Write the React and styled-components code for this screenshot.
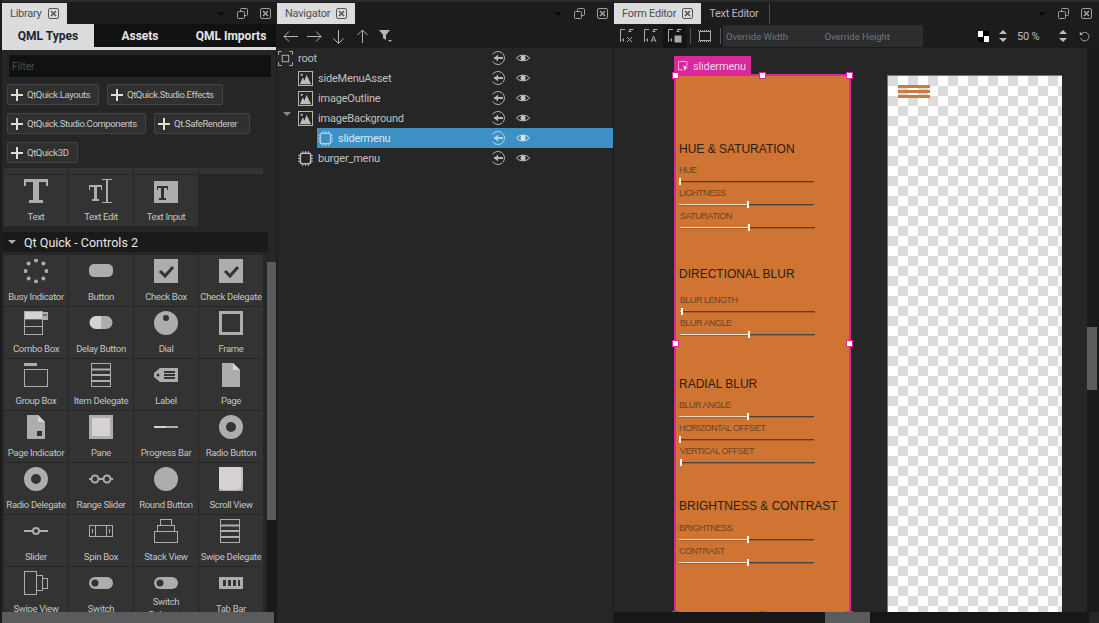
import React from 'react';
import styled, { createGlobalStyle } from 'styled-components';

const GlobalStyle = createGlobalStyle`
  html, body { margin: 0; padding: 0; background: #1c1c1c; overflow: hidden; }
  * { box-sizing: border-box; }
`;

const Shell = styled.div`
  width: 1099px;
  height: 623px;
  display: flex;
  padding-left: 2px;
  background: #1c1c1c;
  font-family: Roboto, "Open Sans", sans-serif;
  font-size: 11px;
  overflow: hidden;
`;
const Pane = styled.section`
  width: ${p => p.$width}px;
  margin-right: ${p => p.$gap || 0}px;
  display: flex;
  flex-direction: column;
  height: 623px;
  background: #262626;
  overflow: hidden;
`;
const TabBar = styled.div`
  height: 24px;
  flex: none;
  display: flex;
  background: #1c1c1c;
  border-top: 2px solid #2a2a2a;
  padding-top: 1px;
`;
const Tab = styled.div`
  height: 21px;
  padding: 0 8px;
  display: flex;
  align-items: center;
  gap: 6px;
  font-size: 11px;
  letter-spacing: -0.25px;
  white-space: nowrap;
  background: ${p => (p.$active ? '#dcdcdc' : 'transparent')};
  color: ${p => (p.$active ? '#4a4f55' : '#b9b9b9')};
  border-right: ${p => (p.$active ? 'none' : '1px solid #4a4a4a')};
  width: ${p => (p.$wide ? `${p.$wide}px` : 'auto')};
`;
const PaneActions = styled.div`
  margin-left: auto;
  width: 54px;
  margin-right: ${p => p.$right}px;
  display: flex;
  align-items: center;
  justify-content: space-between;
  color: #a8a8a8;
`;
const Triangle = styled.span`
  width: 0;
  height: 0;
  border-left: 4px solid transparent;
  border-right: 4px solid transparent;
  border-top: 4px solid #0b0b0b;
`;

const CloseBox = ({ size = 11, color = '#555' }) => (
  <svg width={size} height={size} viewBox="0 0 11 11" fill="none" stroke={color}>
    <rect x=".5" y=".5" width="10" height="10" rx="1.5" />
    <path d="M3 3l5 5M8 3l-5 5" strokeWidth="1.6" />
  </svg>
);
const FloatIcon = () => (
  <svg width="11" height="11" viewBox="0 0 11 11" fill="none" stroke="#a0a0a0">
    <rect x="3.5" y=".5" width="7" height="7" rx="1" />
    <rect x=".5" y="3.5" width="7" height="7" rx="1" fill="#1c1c1c" />
  </svg>
);
const Actions = ({ right = 5 }) => (
  <PaneActions $right={right}>
    <Triangle />
    <FloatIcon />
    <CloseBox color="#a0a0a0" />
  </PaneActions>
);

/* library */
const SubTabs = styled.div`
  height: 26px;
  flex: none;
  display: flex;
  background: #111;
  border-bottom: 3px solid #dcdcdc;
`;
const SubTab = styled.div`
  width: ${p => p.$width}px;
  display: flex;
  align-items: center;
  justify-content: center;
  font-size: 12px;
  font-weight: 700;
  color: ${p => (p.$active ? '#1c2430' : '#e6e6e6')};
  background: ${p => (p.$active ? '#dcdcdc' : 'transparent')};
`;
const Filter = styled.div`
  margin: 5px 5px 0 7px;
  height: 22px;
  flex: none;
  padding-left: 3px;
  display: flex;
  align-items: center;
  background: #111;
  color: #4c4c4c;
  font-size: 10px;
`;
const ImportList = styled.div`
  height: 91px;
  flex: none;
  padding: 7px 0 0 5px;
  display: flex;
  flex-wrap: wrap;
  align-content: flex-start;
  gap: 8px;
`;
const ImportButton = styled.div`
  width: ${p => p.$width}px;
  height: 21px;
  padding-left: 3px;
  display: flex;
  align-items: center;
  gap: 4px;
  background: #303030;
  border: 1px solid #444;
  border-radius: 2px;
  color: #c9c9c9;
  font-size: 9.5px;
  letter-spacing: -0.4px;
  white-space: nowrap;
  svg { flex: none; }
`;
const Plus = () => (
  <svg width="12" height="12" viewBox="0 0 12 12" fill="#dedede">
    <path d="M5 0h2v5h5v2H7v5H5V7H0V5h5z" />
  </svg>
);
const LibraryBody = styled.div`
  flex: 1;
  position: relative;
  overflow: hidden;
  padding-left: 2px;
`;
const CellGrid = styled.div`
  display: grid;
  grid-template-columns: repeat(4, 64px);
  grid-auto-rows: ${p => p.$rows || 51}px;
  gap: 1px;
  margin-top: ${p => p.$top || 0}px;
`;
const Cell = styled.div`
  background: #333;
  color: #adadad;
  overflow: hidden;
  padding-top: 4px;
  display: flex;
  flex-direction: column;
  align-items: center;
  svg { flex: none; }
`;
const CellLabel = styled.div`
  height: 23px;
  flex: none;
  margin-top: ${p => (p.$multi ? 1 : 2)}px;
  display: flex;
  align-items: center;
  text-align: center;
  white-space: pre;
  font-size: 9.5px;
  letter-spacing: -0.32px;
  line-height: 13px;
  color: #c4c4c4;
`;
const SectionHead = styled.div`
  height: 20px;
  margin: 6px 8px 3px -2px;
  padding-left: 6px;
  display: flex;
  align-items: center;
  gap: 8px;
  background: #1a1a1a;
  color: #e8e8e8;
  font-size: 12.5px;
`;
const DownTriangle = styled.span`
  width: 0;
  height: 0;
  border-left: 4px solid transparent;
  border-right: 4px solid transparent;
  border-top: 4px solid ${p => p.$color || '#aaa'};
`;
const VScroll = styled.div`
  position: absolute;
  top: 94px;
  right: 0;
  bottom: 0;
  width: 9px;
  background: #1a1a1a;
`;
const VThumb = styled.div`
  height: 258px;
  background: #5a5b5d;
`;
const HScroll = styled.div`
  position: absolute;
  left: 0;
  right: 2px;
  bottom: 0;
  height: 11px;
  background: #5a5b5d;
`;

const I = ({ children }) => (
  <svg width="24" height="24" viewBox="0 0 24 24" fill="currentColor">{children}</svg>
);
const light = '#d6d2d2';
const dark = '#333';
const line = { fill: 'none', stroke: 'currentColor' };

const icons = {
  text: <path d="M0 0h24v7h-2V3H15v18h4v3H5v-3h4V3H2v4H0z" />,
  textEdit: <><path d="M0 6h13v5h-1V8H8v12h2v2H3v-2h2V8H1v3H0z" /><path d="M13 0h10v1h-4v22h4v1H13v-1h4V1h-4z" /></>,
  textInput: <path fillRule="evenodd" d="M0 2h24v22H0zM3 7v4h1V9h3v10H5v2h7v-2h-2V9h3v2h1V7z" />,
  busy: <>{[0, 45, 90, 135, 180, 225, 270, 315].map(a => (
    <circle key={a} cx={12 + 10.5 * Math.sin(a * Math.PI / 180)} cy={12 - 10.5 * Math.cos(a * Math.PI / 180)} r="2" />
  ))}</>,
  button: <rect y="5" width="24" height="13" rx="5" />,
  check: <><rect width="24" height="24" /><path d="M6 12l5 5 8-9" fill="none" stroke={dark} strokeWidth="3" /></>,
  combo: <><rect x=".5" y=".5" width="18" height="23" {...line} /><path d="M.5 8h18M.5 15.5h18" {...line} /><rect x="1" y="1" width="17" height="7" fill={light} /><rect x="18" y="1" width="6" height="8" /><path d="M19 4h4" stroke={dark} /></>,
  delay: <><path d="M12 5H7a6.500 6.500 0 000 13h5z" fill={light} /><path d="M12 5h5a6.500 6.500 0 010 13h-5z" /></>,
  dial: <path fillRule="evenodd" d="M12 0a12 12 0 110 24 12 12 0 010-24zm0 4a3 3 0 100 6 3 3 0 000-6z" />,
  frame: <path fillRule="evenodd" d="M0 0h24v24H0zM3 3v18h18V3z" />,
  group: <><rect x="0" y="0" width="13" height="3" /><rect x=".5" y="6.500" width="23" height="17" {...line} /></>,
  item: <><rect x="2.500" y=".5" width="19" height="23" {...line} /><path d="M2.500 6.500h19M2.500 12h19M2.500 18h19" {...line} strokeWidth="2" /></>,
  label: <path fillRule="evenodd" d="M6 5h18v14H6L0 14v-4zM4 10.500a1.500 1.500 0 100 3 1.500 1.500 0 000-3zM10 8v2h11V8zm0 3v2h11v-2zm0 3v2h11v-2z" />,
  page: <><path d="M3 0h11l7 7v17H3z" /><path d="M14 0l7 7h-7z" fill={light} /></>,
  pageInd: <><path d="M3 0h11l7 7v17H3z" /><path d="M14 0l7 7h-7z" fill={light} /><rect x="13" y="16" width="5" height="5" fill={dark} /></>,
  pane: <><rect width="24" height="24" /><rect x="3" y="3" width="18" height="18" fill={light} /></>,
  progress: <><rect y="11" width="12" height="2" fill={light} /><rect x="12" y="11" width="12" height="2" /></>,
  radio: <path fillRule="evenodd" d="M12 0a12 12 0 110 24 12 12 0 010-24zm0 7a5 5 0 100 10 5 5 0 000-10z" />,
  range: <><path d="M0 11h24v2H0z" /><circle cx="6" cy="12" r="3.500" fill={dark} stroke="currentColor" strokeWidth="2" /><circle cx="18" cy="12" r="3.500" fill={dark} stroke="currentColor" strokeWidth="2" /></>,
  round: <circle cx="12" cy="12" r="12" />,
  scroll: <><rect width="24" height="24" /><rect width="22" height="22" fill={light} /><rect x="3" y="22" width="17" height="1" fill={light} /><rect x="22.500" y="2" width="1" height="17" fill={light} /></>,
  slider: <><path d="M0 11h24v2H0z" /><circle cx="12" cy="12" r="3" fill={dark} stroke="currentColor" strokeWidth="2" /></>,
  spin: <><rect x=".5" y="6.500" width="23" height="11" {...line} /><path d="M6.500 7v11M17.500 7v11" {...line} /><path d="M3.500 10v4M20.500 10v4" {...line} /></>,
  stack: <><rect x=".5" y="12.500" width="23" height="11" {...line} /><rect x="3.500" y="6.500" width="17" height="6" {...line} /><rect x="6.500" y=".5" width="11" height="6" {...line} /></>,
  swipeDel: <><rect x="1.500" y=".5" width="19" height="23" {...line} /><path d="M1.500 6.500h19M1.500 12h19M1.500 18h19" {...line} strokeWidth="2" /></>,
  swipeView: <><rect x=".5" y=".5" width="12" height="23" {...line} /><rect x="12.500" y="4.500" width="6" height="15" {...line} /><rect x="18.500" y="7.500" width="5" height="10" {...line} /></>,
  switchI: <><rect y="6" width="24" height="12" rx="6" /><circle cx="6" cy="12" r="3.500" fill={dark} /></>,
  tabBar: <path fillRule="evenodd" d="M0 6h24v12H0zM4 9v6h3V9zm5 0v6h3V9zm5 0v6h3V9zm5 0v6h2V9z" />,
};

const topRow = [
  { key: 'text', label: 'Text' },
  { key: 'textEdit', label: 'Text Edit' },
  { key: 'textInput', label: 'Text Input' },
];
const controls = [
  ['busy', 'Busy Indicator'], ['button', 'Button'], ['check', 'Check Box'], ['check', 'Check Delegate'],
  ['combo', 'Combo Box'], ['delay', 'Delay Button'], ['dial', 'Dial'], ['frame', 'Frame'],
  ['group', 'Group Box'], ['item', 'Item Delegate'], ['label', 'Label'], ['page', 'Page'],
  ['pageInd', 'Page Indicator'], ['pane', 'Pane'], ['progress', 'Progress Bar'], ['radio', 'Radio Button'],
  ['radio', 'Radio Delegate'], ['range', 'Range Slider'], ['round', 'Round Button'], ['scroll', 'Scroll View'],
  ['slider', 'Slider'], ['spin', 'Spin Box'], ['stack', 'Stack View'], ['swipeDel', 'Swipe Delegate'],
  ['swipeView', 'Swipe View'], ['switchI', 'Switch'], ['switchI', 'Switch\nDelegate'], ['tabBar', 'Tab Bar'],
];

const Library = () => (
  <Pane $width={274} $gap={1}>
    <TabBar>
      <Tab $active>Library <CloseBox /></Tab>
      <Actions />
    </TabBar>
    <SubTabs>
      <SubTab $active $width={92}>QML Types</SubTab>
      <SubTab $width={92}>Assets</SubTab>
      <SubTab $width={90}>QML Imports</SubTab>
    </SubTabs>
    <Filter>Filter</Filter>
    <ImportList>
      <ImportButton $width={92}><Plus />QtQuick.Layouts</ImportButton>
      <ImportButton $width={116}><Plus />QtQuick.Studio.Effects</ImportButton>
      <ImportButton $width={139}><Plus />QtQuick.Studio.Components</ImportButton>
      <ImportButton $width={96}><Plus />Qt.SafeRenderer</ImportButton>
      <ImportButton $width={71}><Plus />QtQuick3D</ImportButton>
    </ImportList>
    <LibraryBody>
      <CellGrid $rows={6}>
        <Cell /><Cell /><Cell /><Cell />
      </CellGrid>
      <CellGrid $top={1}>
        {topRow.map(c => (
          <Cell key={c.key}><I>{icons[c.key]}</I><CellLabel>{c.label}</CellLabel></Cell>
        ))}
      </CellGrid>
      <SectionHead><DownTriangle />Qt Quick - Controls 2</SectionHead>
      <CellGrid>
        {controls.map(([k, l]) => (
          <Cell key={l}><I>{icons[k]}</I><CellLabel $multi={l.includes('\n')}>{l}</CellLabel></Cell>
        ))}
      </CellGrid>
      <VScroll><VThumb /></VScroll>
      <HScroll />
    </LibraryBody>
  </Pane>
);

/* navigator */
const NavTools = styled.div`
  height: 24px;
  flex: none;
  padding-left: 6px;
  display: flex;
  align-items: center;
  gap: 9px;
  background: #1c1c1c;
  color: #b5b5b5;
`;
const Tree = styled.div`
  display: flex;
  flex-direction: column;
`;
const TreeRow = styled.div`
  height: 20px;
  display: flex;
  align-items: center;
  position: relative;
  padding-left: ${p => p.$depth * 20 + 1}px;
  color: #bdbdbd;
`;
const TreeItem = styled.div`
  flex: 1;
  height: 20px;
  display: flex;
  align-items: center;
  gap: 5px;
  padding-right: 83px;
  font-size: 11px;
  letter-spacing: -0.2px;
  background: ${p => (p.$selected ? '#3d90c4' : 'transparent')};
  color: ${p => (p.$selected ? '#dfe9f0' : '#c0c0c0')};
  margin-left: ${p => (p.$selected ? -1 : 0)}px;
  padding-left: ${p => (p.$selected ? 1 : 0)}px;
`;
const RowActions = styled.div`
  margin-left: auto;
  display: flex;
  gap: 11px;
`;
const TreeArrow = styled.span`
  position: absolute;
  left: 6px;
  top: 8px;
`;

const Arrow = ({ dir }) => {
  const d = {
    left: 'M15 7.500H1M6 2.500l-5 5 5 5',
    right: 'M0 7.500h14M9 2.500l5 5-5 5',
    down: 'M7.500 1v13M2.500 9.500l5 5 5-5',
    up: 'M7.500 14V1M2.500 6l5-5 5 5',
  }[dir];
  return (
    <svg width="15" height="15" viewBox="0 0 15 15" fill="none" stroke="currentColor"><path d={d} /></svg>
  );
};
const FunnelIcon = () => (
  <svg width="14" height="14" viewBox="0 0 14 14" fill="currentColor">
    <path d="M0 1h11L7 6v5L4 9V6zM9 11h4l-2 2z" />
  </svg>
);
const RootIcon = () => (
  <svg width="15" height="15" viewBox="0 0 16 16" fill="none" stroke="#bdbdbd">
    <path d="M.5 4V.5H4M12 .5h3.500V4M.5 12v3.500H4M12 15.500h3.500V12" />
    <rect x="4.500" y="4.500" width="7" height="7" />
  </svg>
);
const ImageIcon = () => (
  <svg width="15" height="15" viewBox="0 0 16 16" fill="none" stroke="#bdbdbd">
    <rect x=".5" y=".5" width="15" height="15" />
    <path d="M2 14l3-7 2 3 2-6 5 10z" fill="#bdbdbd" stroke="none" />
    <circle cx="4" cy="4" r="1.200" fill="#bdbdbd" stroke="none" />
  </svg>
);
const ChipIcon = ({ color = '#bdbdbd' }) => (
  <svg width="15" height="15" viewBox="0 0 16 16" fill="none" stroke={color}>
    <rect x="2.500" y="2.500" width="11" height="11" rx="2" strokeWidth="1.600" />
    <path d="M5 0v2M8 0v2M11 0v2M5 14v2M8 14v2M11 14v2M0 5h2M0 8h2M0 11h2M14 5h2M14 8h2M14 11h2" />
  </svg>
);
const ExportIcon = ({ color = '#b5b5b5' }) => (
  <svg width="14" height="14" viewBox="0 0 14 14" fill="none" stroke={color}>
    <path d="M1.500 3.500A6.500 6.500 0 117 13.500a6.500 6.500 0 01-5.500-3" />
    <path d="M3 7h9" strokeWidth="2" />
    <path d="M7 3.500L3 7l4 3.500z" fill={color} stroke="none" />
  </svg>
);
const EyeIcon = ({ color = '#c4c4c4' }) => (
  <svg width="14" height="14" viewBox="0 0 14 14" fill="none" stroke={color}>
    <path d="M.5 7C3 3.300 11 3.300 13.500 7 11 10.700 3 10.700.5 7z" />
    <circle cx="7" cy="7" r="2.500" fill={color} stroke="none" />
  </svg>
);

const treeRows = [
  { name: 'root', depth: 0, icon: <RootIcon /> },
  { name: 'sideMenuAsset', depth: 1, icon: <ImageIcon /> },
  { name: 'imageOutline', depth: 1, icon: <ImageIcon /> },
  { name: 'imageBackground', depth: 1, icon: <ImageIcon />, open: true },
  { name: 'slidermenu', depth: 2, icon: <ChipIcon color="#a9cfe6" />, selected: true },
  { name: 'burger_menu', depth: 1, icon: <ChipIcon /> },
];

const Navigator = () => (
  <Pane $width={336} $gap={1}>
    <TabBar>
      <Tab $active>Navigator <CloseBox /></Tab>
      <Actions />
    </TabBar>
    <NavTools>
      <Arrow dir="left" />
      <Arrow dir="right" />
      <Arrow dir="down" />
      <Arrow dir="up" />
      <FunnelIcon />
    </NavTools>
    <Tree>
      {treeRows.map(r => (
        <TreeRow key={r.name} $depth={r.depth}>
          {r.open && <TreeArrow><DownTriangle $color="#8a8a8a" /></TreeArrow>}
          <TreeItem $selected={r.selected}>
            {r.icon}
            {r.name}
            <RowActions>
              <ExportIcon color={r.selected ? '#b9d6e8' : undefined} />
              <EyeIcon color={r.selected ? '#d8e6ef' : undefined} />
            </RowActions>
          </TreeItem>
        </TreeRow>
      ))}
    </Tree>
  </Pane>
);

/* form editor */
const FormTools = styled.div`
  height: 24px;
  flex: none;
  padding-left: 1px;
  display: flex;
  align-items: center;
  background: #1c1c1c;
  color: #a8a8a8;
`;
const ToolButton = styled.div`
  width: 24px;
  height: 23px;
  display: flex;
  align-items: center;
  justify-content: center;
  background: ${p => (p.$on ? '#141414' : 'transparent')};
`;
const ToolSep = styled.span`
  width: 1px;
  height: 16px;
  margin: 0 ${p => p.$after}px 0 ${p => p.$before}px;
  background: #555;
`;
const Override = styled.div`
  width: 200px;
  height: 22px;
  padding-left: 3px;
  display: flex;
  align-items: center;
  background: #2b2d2f;
  color: #70757a;
  font-size: 9.5px;
`;
const OverrideField = styled.span`
  width: 100px;
`;
const ZoomBox = styled.div`
  margin-left: auto;
  width: 121px;
  display: flex;
  align-items: center;
  color: #bdbdbd;
  font-size: 11px;
`;
const ZoomValue = styled.span`
  width: 20px;
  margin: 0 22px 0 10px;
  white-space: nowrap;
  letter-spacing: -0.2px;
`;
const CheckerSwatch = styled.span`
  width: 11px;
  height: 11px;
  margin-right: 10px;
  background: conic-gradient(#000 0 25%, #fff 0 50%, #000 0 75%, #fff 0);
`;
const Workspace = styled.div`
  flex: 1;
  display: flex;
  min-height: 0;
`;
const Canvas = styled.div`
  width: 473px;
  height: 564px;
  flex: none;
  padding: 26px 0 0 60px;
  display: flex;
  align-items: flex-start;
  gap: 36px;
  overflow: hidden;
  background: #262626;
`;
const SideBar = styled.div`
  flex: 1;
  height: 564px;
  background: #1a1a1a;
  padding-top: 279px;
`;
const SideThumb = styled.div`
  width: 10px;
  height: 63px;
  background: #5a5b5d;
`;
const BottomBar = styled.div`
  height: 11px;
  flex: none;
  padding-left: 211px;
  display: flex;
  background: #171717;
`;
const BottomThumb = styled.div`
  width: 45px;
  height: 11px;
  background: #5a5b5d;
`;
const BottomCorner = styled.div`
  width: 10px;
  margin-left: auto;
  background: #262626;
`;
const SelectedForm = styled.div`
  position: relative;
  flex: none;
  width: 177px;
  height: 538px;
  background: #cf7433;
  border: 2px solid #d8289b;
  border-bottom: none;
  font-family: "Liberation Sans", Arial, sans-serif;
`;
const FormLabel = styled.div`
  position: absolute;
  left: -2px;
  top: -20px;
  width: 77px;
  height: 20px;
  padding-left: 4px;
  display: flex;
  align-items: center;
  gap: 4px;
  background: #d8289b;
  color: #f6d4ea;
  font-family: Roboto, sans-serif;
  font-size: 11px;
  letter-spacing: -0.15px;
`;
const Handle = styled.span`
  position: absolute;
  left: ${p => p.$x}px;
  top: ${p => p.$y}px;
  width: 7px;
  height: 7px;
  background: #fff;
  border: 1px solid #d8289b;
`;
const SliderSection = styled.div`
  margin-top: ${p => p.$top}px;
  padding-left: 3px;
`;
const SectionTitle = styled.div`
  height: 16px;
  line-height: 16px;
  margin-bottom: ${p => p.$gap}px;
  color: #2c1e14;
  font-size: 12px;
  white-space: nowrap;
`;
const SliderField = styled.div`
  height: 23px;
  margin-left: ${p => p.$dx || 0}px;
`;
const SliderLabel = styled.div`
  height: 8px;
  line-height: 8px;
  font-size: 9px;
  letter-spacing: -0.5px;
  color: #6a4426;
  white-space: nowrap;
`;
const SliderTrack = styled.div`
  position: relative;
  width: 135px;
  height: 1px;
  margin-top: 7px;
  background: #4d433b;
  box-shadow: 0 1px 0 rgba(90, 60, 40, 0.35);
`;
const SliderFill = styled.div`
  width: ${p => p.$value}%;
  height: 1px;
  background: #ecdccd;
`;
const SliderKnob = styled.span`
  position: absolute;
  left: ${p => p.$value}%;
  top: -3px;
  width: 2px;
  height: 7px;
  background: #fff;
`;
const PreviewForm = styled.div`
  flex: none;
  width: 175px;
  height: 537px;
  margin-top: 1px;
  padding: 9px 0 0 10px;
  border-top: 1px solid #777;
  border-left: 1px solid #777;
  background: conic-gradient(#fff 0 25%, #dcdcdc 0 50%, #fff 0 75%, #dcdcdc 0) 0 0/20px 20px;
`;
const BurgerBar = styled.div`
  width: 32px;
  height: 3px;
  margin-bottom: 2px;
  background: #cc7a42;
`;

const sections = [
  {
    title: 'HUE & SATURATION', top: 65, gap: 9,
    sliders: [['HUE', 0, 0], ['LIGHTNESS', 50, 0], ['SATURATION', 50, 1]],
  },
  {
    title: 'DIRECTIONAL BLUR', top: 31, gap: 14,
    sliders: [['BLUR LENGTH', 1, 1], ['BLUR ANGLE', 50, 1]],
  },
  {
    title: 'RADIAL BLUR', top: 34, gap: 9,
    sliders: [['BLUR ANGLE', 50, 0], ['HORIZONTAL OFFSET', 0, 0], ['VERTICAL OFFSET', 0, 1]],
  },
  {
    title: 'BRIGHTNESS & CONTRAST', top: 28, gap: 10,
    sliders: [['BRIGHTNESS', 50, 0], ['CONTRAST', 50, 0]],
  },
];

const AlignIcon = ({ children }) => (
  <svg width="14" height="14" viewBox="0 0 14 14" fill="none" stroke="currentColor">
    <path d="M.5 13V.5H5M9 .5h4.500" />
    <path d="M8 3l2-2 2 2z" fill="currentColor" stroke="none" />
    <path d="M4 9l-2 2 2 2z" fill="currentColor" stroke="none" />
    {children}
  </svg>
);
const SpinArrows = () => (
  <svg width="8" height="14" viewBox="0 0 8 14" fill="#bdbdbd"><path d="M4 1l4 4H0zM4 13L0 9h8z" /></svg>
);

const FormEditor = () => (
  <Pane $width={485}>
    <TabBar>
      <Tab $active>Form Editor <CloseBox /></Tab>
      <Tab $wide={69}>Text Editor</Tab>
      <Actions right={7} />
    </TabBar>
    <FormTools>
      <ToolButton><AlignIcon><path d="M7 8l5 5M12 8l-5 5" /></AlignIcon></ToolButton>
      <ToolButton><AlignIcon><path d="M7 13l2.500-6 2.500 6M8 11h3" /></AlignIcon></ToolButton>
      <ToolButton $on><AlignIcon><rect x="7" y="7" width="6" height="6" fill="currentColor" /></AlignIcon></ToolButton>
      <ToolSep $before={3} $after={7} />
      <svg width="14" height="12" viewBox="0 0 14 12" fill="none" stroke="currentColor">
        <rect x="1.500" y="1.500" width="11" height="9" />
        <path d="M0 .5h14M0 11.500h14" strokeDasharray="1 1" />
      </svg>
      <ToolSep $before={8} $after={2} />
      <Override>
        <OverrideField>Override Width</OverrideField>
        <OverrideField>Override Height</OverrideField>
      </Override>
      <ZoomBox>
        <CheckerSwatch />
        <SpinArrows />
        <ZoomValue>50 %</ZoomValue>
        <SpinArrows />
        <svg width="11" height="11" viewBox="0 0 14 14" fill="none" stroke="#bdbdbd" style={{ marginLeft: 12 }}>
          <path d="M3 3.500A5.500 5.500 0 112 9" />
          <path d="M1 1v4h4z" fill="#bdbdbd" stroke="none" />
        </svg>
      </ZoomBox>
    </FormTools>
    <Workspace>
      <Canvas>
        <SelectedForm>
          <FormLabel>
            <svg width="11" height="11" viewBox="0 0 13 13" fill="none" stroke="#f6d4ea">
              <path d="M6 10.500H.5V.5h10V6" />
              <path d="M6 5l6 3-2.500 1L8 12z" fill="#f6d4ea" stroke="none" />
            </svg>
            slidermenu
          </FormLabel>
          <Handle $x={-4} $y={-4} />
          <Handle $x={83} $y={-4} />
          <Handle $x={170} $y={-4} />
          <Handle $x={-4} $y={264} />
          <Handle $x={170} $y={264} />
          <Handle $x={-4} $y={535} />
          <Handle $x={83} $y={535} />
          <Handle $x={170} $y={535} />
          {sections.map(s => (
            <SliderSection key={s.title} $top={s.top}>
              <SectionTitle $gap={s.gap}>{s.title}</SectionTitle>
              {s.sliders.map(([label, value, dx]) => (
                <SliderField key={label} $dx={dx}>
                  <SliderLabel>{label}</SliderLabel>
                  <SliderTrack>
                    <SliderFill $value={value} />
                    <SliderKnob $value={value} />
                  </SliderTrack>
                </SliderField>
              ))}
            </SliderSection>
          ))}
        </SelectedForm>
        <PreviewForm>
          <BurgerBar />
          <BurgerBar />
          <BurgerBar />
        </PreviewForm>
      </Canvas>
      <SideBar><SideThumb /></SideBar>
    </Workspace>
    <BottomBar><BottomThumb /><BottomCorner /></BottomBar>
  </Pane>
);

export default function App() {
  return (
    <>
      <GlobalStyle />
      <Shell>
        <Library />
        <Navigator />
        <FormEditor />
      </Shell>
    </>
  );
}
